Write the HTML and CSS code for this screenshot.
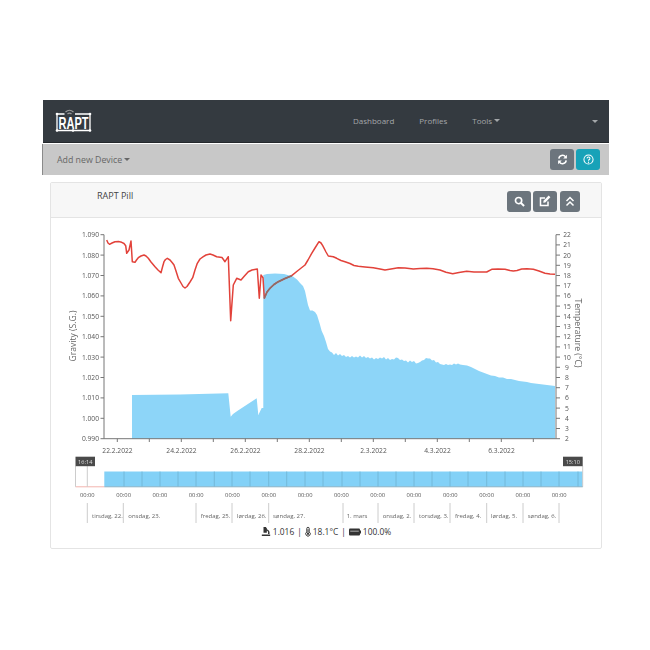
FILE: index.html
```html
<!DOCTYPE html>
<html lang="en">
<head>
    <meta charset="UTF-8">
    <meta name="viewport" content="width=device-width, initial-scale=1.0">
    <title>RAPT Pill</title>
    <link rel="stylesheet" href="styles.css">
</head>
<body>

    <div class="app">
        <nav class="navbar">
            <svg class="logo" width="37" height="24" viewBox="0 0 37 24">
                <path d="M9.5 5H2V21.5H35V5H20" fill="none" stroke="#fff" stroke-width="1.3"/>
                <path d="M10.5 3Q14.5 -0.5 18.5 3M12.5 5Q14.5 3 16.5 5" fill="none" stroke="#9a9a9a" stroke-width="1.2"/>
                <text class="logo-text" transform="translate(18.5 19.5) scale(0.69 1)">RAPT</text>
                <circle cx="2" cy="5" r="1.3" fill="#fff"/>
                <circle cx="2" cy="21.5" r="1.3" fill="#fff"/>
                <circle cx="35" cy="5" r="1.3" fill="#fff"/>
                <circle cx="35" cy="21.5" r="1.3" fill="#fff"/>
                <circle cx="18" cy="21.5" r="1.3" fill="#fff"/>
            </svg>
            <div class="nav-links">
                <a class="nav-link">Dashboard</a>
                <a class="nav-link">Profiles</a>
                <a class="nav-link">Tools<span class="caret"></span></a>
            </div>
            <span class="caret nav-end"></span>
        </nav>

        <div class="subbar">
            <a class="add-device">Add new Device<span class="caret"></span></a>
            <div class="btn-row">
                <button class="btn">
                    <svg width="11" height="11" viewBox="0 0 12 12"><path d="M2 5A4 4 0 0 1 9.3 3.2M10 7A4 4 0 0 1 2.7 8.8" fill="none" stroke="#fff" stroke-width="1.7"/><path d="M10.8 0.8V4.8H6.8ZM1.2 11.2V7.2H5.2Z" fill="#fff"/></svg>
                </button>
                <button class="btn btn-info">
                    <svg width="11" height="11" viewBox="0 0 12 12"><circle cx="6" cy="6" r="5" fill="none" stroke="#fff" stroke-width="1.1"/><path d="M4.4 4.8A1.6 1.6 0 1 1 6 6.5V7.4" fill="none" stroke="#fff" stroke-width="1.1"/><circle cx="6" cy="9" r="0.7" fill="#fff"/></svg>
                </button>
            </div>
        </div>

        <div class="card">
            <div class="card-header">
                <span class="card-title">RAPT Pill</span>
                <div class="btn-row card-btns">
                    <button class="btn btn-card">
                        <svg width="11" height="11" viewBox="0 0 12 12"><circle cx="5" cy="5" r="3.4" fill="none" stroke="#fff" stroke-width="1.8"/><path d="M7.5 7.5L11 11" stroke="#fff" stroke-width="2.2"/></svg>
                    </button>
                    <button class="btn btn-card">
                        <svg width="12" height="12" viewBox="0 0 12 12"><path d="M9 6.5V10.5H1.5V3H6" fill="none" stroke="#fff" stroke-width="1.5"/><path d="M4.5 5.7L9.7 0.6L11.4 2.3L6.3 7.5L4.3 7.8Z" fill="#fff"/></svg>
                    </button>
                    <button class="btn btn-card btn-narrow">
                        <svg width="10" height="11" viewBox="0 0 10 11"><path d="M1.5 5L5 1.5L8.5 5M1.5 9.5L5 6L8.5 9.5" fill="none" stroke="#fff" stroke-width="1.5"/></svg>
                    </button>
                </div>
            </div>

            <svg class="chart" width="552" height="307" viewBox="50 218 552 307">
                <!-- main plot, coordinates are page pixels -->
                <path class="area" d="M132 438.7V395L180 394.5L228.3 393.3L230.7 416.7L233 414L238 410.5L256.7 398.3L258.3 415L261.7 408L263.3 408V275L267 274L275 273.5L284 274L293 276.5L297 279.5L300 283L303 286L305 291L306.5 298L308 305L310 310.5L312.5 310.5L315 312L317 315L319.5 323L321.7 331L324 336L326 342L328 349L330 351.5L332 352.5L334 355L336 353L338 355.5L340 354L342 356L344 355L346 357L348 356L350 357.5L352 356L354 357.5L356 356.5L358 357.5L360 355.5L362 357.5L364 356L366 358L368 357L370 358.5L372 357.5L374 359.5L376 358L378 359L380 357.5L382 358.5L384 357L386 359.5L388 358L390 360L392 359L394 359.5L396 357.5L398 358L400 360L402 359.5L404 361L406 360.5L408 362.5L410 360.5L412 362L414 361L416 363.5L418 363L420 362L422 360.5L424 360L426 358L428 358.5L430 358.5L432 360.5L434 360L436 362.5L438 362L440 364L442 364.5L444 365L446 364L448 365L450 364.5L452 365L454 363.5L456 364.5L458 363.5L460 364.5L463 365L467 365.5L471 367L475 369L479 371L483 372.5L487 374L491 375.5L495 376L499 377.5L503 377.5L507 379L511 379L515 380L519 381L523 381.5L527 382L531 383L535 383.5L539 384L543 384.5L547 385L551 385.5L555 386V438.7Z"/>
                <polyline class="temp" points="106.7,240 108,243 109.5,244.3 112,243 115,241.7 118.5,241.6 121.7,242.3 124,243.5 125.7,245.7 126.7,253.3 129,250 131,241 132.3,261.7 135,262.3 136.5,260 138.3,257.7 141,256 144,255 146,256 148.3,258.3 151,262 155,266.7 158,270 161,272.7 162.5,267 164,261.7 165.5,259.5 167.3,258.3 170,260 172.5,263 174,265 176,271 178.3,278.3 181,283 183,286.5 185,288 187,286.5 190,282 192.7,277.7 195,270 197.3,263.3 200,259 203.3,256.7 206,255 210,254 213,255 216.7,256.7 222,257.5 225,261.7 228.3,256.7 230.7,320.7 233.3,285 236.7,278.3 241,280 244,276.5 248.3,271.7 252,270 257.3,269 259.3,298.3 261,275 263,277.7 264.3,298.3 267,292 270,288.3 274,284.5 278.3,281.7 285,278.5 291.7,275.7 298,270.5 305,265 308,260 311.7,253.3 315,248 319,241.7 321,243 322.7,245.7 326,252 328.3,256 333.3,256.7 336.7,258.3 341,260.5 345,261.7 350,263.5 354,265.5 358.3,266.3 365,267 373.3,267.7 380,269 385,270 391,269 398.3,267.7 405,268 413.3,269 420,268.5 426.7,268.3 433,268.7 440,270 446,272.3 452.7,273.7 459,272.5 466.7,271.3 474,272 482,272 486.7,272 491.7,269.3 498,269 505,269.3 510,270.5 513.3,271 517,270.5 521.7,269 527,268.8 533.3,269.3 539,271 545,273.3 550,274 555,274.3"/>
                <polyline class="temp-over" points="264.3,298.3 267,292 270,288.3 274,284.5 278.3,281.7 285,278.5 291.7,275.7"/>

                <path class="axis" d="M104 234.7V438.7H556V234.7"/>
                <path class="axis" d="M100.5 234.7H104M100.5 255.1H104M100.5 275.5H104M100.5 295.9H104M100.5 316.3H104M100.5 336.7H104M100.5 357.1H104M100.5 377.5H104M100.5 397.9H104M100.5 418.3H104M100.5 438.7H104"/>
                <path class="axis" d="M556 234.7H560M556 244.9H560M556 255.1H560M556 265.3H560M556 275.5H560M556 285.7H560M556 295.9H560M556 306.1H560M556 316.3H560M556 326.5H560M556 336.7H560M556 346.9H560M556 357.1H560M556 367.3H560M556 377.5H560M556 387.7H560M556 397.9H560M556 408.1H560M556 418.3H560M556 428.5H560M556 438.7H560"/>
                <path class="axis" d="M117.3 438.7V442M149.3 438.7V442M181.3 438.7V442M213.3 438.7V442M245.3 438.7V442M277.3 438.7V442M309.3 438.7V442M341.3 438.7V442M373.3 438.7V442M405.3 438.7V442M437.3 438.7V442M469.3 438.7V442M501.3 438.7V442M533.3 438.7V442"/>

                <g class="tick-left">
                    <text x="99" y="237.2">1.090</text>
                    <text x="99" y="257.6">1.080</text>
                    <text x="99" y="278">1.070</text>
                    <text x="99" y="298.4">1.060</text>
                    <text x="99" y="318.8">1.050</text>
                    <text x="99" y="339.2">1.040</text>
                    <text x="99" y="359.6">1.030</text>
                    <text x="99" y="380">1.020</text>
                    <text x="99" y="400.4">1.010</text>
                    <text x="99" y="420.8">1.000</text>
                    <text x="99" y="441.2">0.990</text>
                </g>
                <g class="tick-right">
                    <text x="567" y="237.2">22</text>
                    <text x="567" y="247.4">21</text>
                    <text x="567" y="257.6">20</text>
                    <text x="567" y="267.8">19</text>
                    <text x="567" y="278">18</text>
                    <text x="567" y="288.2">17</text>
                    <text x="567" y="298.4">16</text>
                    <text x="567" y="308.6">15</text>
                    <text x="567" y="318.8">14</text>
                    <text x="567" y="329">13</text>
                    <text x="567" y="339.2">12</text>
                    <text x="567" y="349.4">11</text>
                    <text x="567" y="359.6">10</text>
                    <text x="567" y="369.8">9</text>
                    <text x="567" y="380">8</text>
                    <text x="567" y="390.2">7</text>
                    <text x="567" y="400.4">6</text>
                    <text x="567" y="410.6">5</text>
                    <text x="567" y="420.8">4</text>
                    <text x="567" y="431">3</text>
                    <text x="567" y="441.2">2</text>
                </g>
                <g class="tick-date">
                    <text x="117.5" y="452.5">22.2.2022</text>
                    <text x="181.5" y="452.5">24.2.2022</text>
                    <text x="245.5" y="452.5">26.2.2022</text>
                    <text x="309.5" y="452.5">28.2.2022</text>
                    <text x="373.5" y="452.5">2.3.2022</text>
                    <text x="437.5" y="452.5">4.3.2022</text>
                    <text x="501.5" y="452.5">6.3.2022</text>
                </g>
                <text class="axis-title" transform="translate(76 336) rotate(-90)">Gravity (S.G.)</text>
                <text class="axis-title" transform="translate(575 333) rotate(90)">Temperature (°C)</text>

                <!-- navigator -->
                <rect class="nav-area" x="104.3" y="471.5" width="478.4" height="15.3"/>
                <path class="nav-low" d="M75.5 486.8H104.3"/>
                <path class="nav-frame" d="M75.5 466V486.8M582.7 466V486.8"/>
                <path class="nav-grid-light" d="M87.3 466V486.8"/>
                <path class="nav-grid" d="M124 471.5V486.8M142 471.5V486.8M160 471.5V486.8M178 471.5V486.8M196 471.5V486.8M214.3 471.5V486.8M232 471.5V486.8M250 471.5V486.8M268.7 471.5V486.8M286.7 471.5V486.8M305 471.5V486.8M323 471.5V486.8M342 471.5V486.8M360 471.5V486.8M378 471.5V486.8M396 471.5V486.8M414 471.5V486.8M432 471.5V486.8M450 471.5V486.8M468 471.5V486.8M486.7 471.5V486.8M505 471.5V486.8M523 471.5V486.8M541 471.5V486.8M559 471.5V486.8M578 471.5V486.8"/>
                <path class="nav-base" d="M104.3 486.8H582.7"/>
                <rect class="handle" x="75.5" y="456.7" width="19.5" height="9.5"/>
                <text class="handle-text" x="85.2" y="463.5">16:14</text>
                <rect class="handle" x="563" y="456.7" width="19.7" height="9.5"/>
                <text class="handle-text" x="572.8" y="463.5">15:10</text>

                <g class="tick-time">
                    <text x="87.3" y="497.3">00:00</text>
                    <text x="123.6" y="497.3">00:00</text>
                    <text x="159.9" y="497.3">00:00</text>
                    <text x="196.2" y="497.3">00:00</text>
                    <text x="232.5" y="497.3">00:00</text>
                    <text x="268.8" y="497.3">00:00</text>
                    <text x="305.1" y="497.3">00:00</text>
                    <text x="341.4" y="497.3">00:00</text>
                    <text x="377.7" y="497.3">00:00</text>
                    <text x="414" y="497.3">00:00</text>
                    <text x="450.3" y="497.3">00:00</text>
                    <text x="486.6" y="497.3">00:00</text>
                    <text x="522.9" y="497.3">00:00</text>
                    <text x="559.2" y="497.3">00:00</text>
                </g>
                <path class="day-line" d="M87.3 503V523M123.3 503V523M196 503V523M232 503V523M268.7 503V523M343 503V523M378 503V523M414 503V523M450 503V523M486.7 503V523M523 503V523M559 503V523"/>
                <g class="tick-day">
                    <text x="92" y="518">tirsdag, 22.</text>
                    <text x="128.3" y="518">onsdag, 23.</text>
                    <text x="200.7" y="518">fredag, 25.</text>
                    <text x="237" y="518">lørdag, 26.</text>
                    <text x="273" y="518">søndag, 27.</text>
                    <text x="346.7" y="518">1. mars</text>
                    <text x="382.7" y="518">onsdag, 2.</text>
                    <text x="419" y="518">torsdag, 3.</text>
                    <text x="455" y="518">fredag, 4.</text>
                    <text x="491" y="518">lørdag, 5.</text>
                    <text x="527.7" y="518">søndag, 6.</text>
                </g>
            </svg>

            <div class="status">
                <svg width="10" height="11" viewBox="0 0 12 12"><path d="M3 0.5H6V1.5H7V3.2C9.6 4 10.7 6 10.2 9H8.4C8.9 6.8 8.3 5.4 7 4.8V7.5H3V1.5ZM1 9.5H11V11.5H1Z" fill="#333"/></svg>
                <span>1.016</span>
                <span class="sep">|</span>
                <svg width="6" height="11" viewBox="0 0 8 12"><path d="M2.4 6.6V2A1.6 1.6 0 0 1 5.6 2V6.6A3 3 0 1 1 2.4 6.6Z" fill="none" stroke="#333" stroke-width="1.3"/><circle cx="4" cy="9" r="1.5" fill="#333"/><path d="M4 3V8" stroke="#333" stroke-width="1.2"/></svg>
                <span>18.1°C</span>
                <span class="sep">|</span>
                <svg width="12" height="8" viewBox="0 0 12 8"><rect x="0" y="0.5" width="11" height="7" rx="1" fill="#333"/><rect x="11" y="2.5" width="1" height="3" fill="#333"/><rect x="1.2" y="2.6" width="8.6" height="1.2" fill="#999"/></svg>
                <span>100.0%</span>
            </div>
        </div>
    </div>

</body>
</html>
```

FILE: styles.css
```css
body {
    margin: 0;
    padding: 100px 41px 0 43px;
    background-color: #fff;
    font-family: "Open Sans", "Liberation Sans", sans-serif;
    color: #444;
}
.app {
    width: 566px;
}
.navbar {
    display: flex;
    align-items: center;
    height: 43px;
    padding: 0 12px;
    box-sizing: border-box;
    background-color: #343a40;
    border-bottom: 1px solid #24282c;
}
.logo {
    display: block;
}
.logo-text {
    font-family: "Liberation Sans", sans-serif;
    font-size: 16px;
    font-weight: bold;
    fill: #fff;
    text-anchor: middle;
}
.nav-links {
    display: flex;
    gap: 25px;
    margin-left: 261px;
    margin-top: -1px;
}
.nav-link {
    font-size: 8px;
    color: #a4a7aa;
}
.caret {
    display: inline-block;
    margin-left: 2px;
    vertical-align: 2px;
    border-top: 3px solid currentColor;
    border-left: 3px solid transparent;
    border-right: 3px solid transparent;
}
.nav-end {
    margin-left: auto;
    margin-right: -1px;
    color: #a4a7aa;
}
.subbar {
    display: flex;
    align-items: center;
    justify-content: space-between;
    height: 31px;
    margin-top: 1px;
    padding: 0 9px 0 14px;
    background-color: #c8c8c8;
    box-shadow: -1px 0 0 #8a8a8a;
}
.add-device {
    font-size: 8.8px;
    color: #666;
}
.btn-row {
    display: flex;
    gap: 2px;
}
.btn {
    display: flex;
    align-items: center;
    justify-content: center;
    width: 24px;
    height: 21px;
    padding: 0;
    border: none;
    border-radius: 3px;
    background-color: #6c757d;
}
.btn-info {
    background-color: #17a2b8;
}
.card {
    height: 367px;
    margin: 7px 7px 0;
    box-sizing: border-box;
    border: 1px solid #e4e4e4;
    border-radius: 2px;
}
.card-header {
    display: flex;
    align-items: center;
    justify-content: space-between;
    height: 34px;
    padding: 0 21px 0 46px;
    background-color: #f7f7f7;
    border-bottom: 1px solid #e4e4e4;
}
.card-title {
    margin-top: -9px;
    font-size: 9px;
    color: #444;
}
.card-btns {
    margin-top: 2px;
}
.btn-narrow {
    width: 20px;
    margin-left: 1px;
}
.chart {
    display: block;
    margin-left: -1px;
    will-change: transform;
}
.chart text {
    font-family: "Open Sans", "Liberation Sans", sans-serif;
}
.area {
    fill: #8dd5f8;
}
.temp {
    fill: none;
    stroke: #e2423a;
    stroke-width: 1.5;
    stroke-linejoin: round;
}
.temp-over {
    fill: none;
    stroke: #8c6e6a;
    stroke-width: 1.5;
    stroke-linejoin: round;
}
.axis {
    fill: none;
    stroke: #777;
    stroke-width: 1;
}
.tick-left text,
.tick-right text,
.tick-date text {
    font-size: 6.7px;
    fill: #555;
}
.tick-left text {
    text-anchor: end;
}
.tick-right text,
.tick-date text {
    text-anchor: middle;
}
.axis-title {
    font-size: 8.6px;
    fill: #666;
    text-anchor: middle;
}
.nav-area {
    fill: #83d1f7;
}
.nav-low {
    stroke: #f3b4ae;
    stroke-width: 1;
}
.nav-frame,
.nav-grid-light {
    stroke: #ccc;
    stroke-width: 1;
}
.nav-grid {
    stroke: #6fb2d2;
    stroke-width: 0.8;
}
.nav-base {
    stroke: #8fb4c6;
    stroke-width: 1;
}
.handle {
    fill: #4a4a4a;
}
.handle-text {
    font-size: 5.6px;
    fill: #ddd;
    text-anchor: middle;
}
.tick-time text {
    font-size: 5.8px;
    fill: #555;
    text-anchor: middle;
}
.tick-day text {
    font-size: 6px;
    fill: #666;
}
.day-line {
    stroke: #ccc;
    stroke-width: 1;
}
.status {
    display: flex;
    align-items: center;
    justify-content: center;
    gap: 2px;
    height: 13px;
    font-size: 8.4px;
    color: #333;
}
.sep {
    margin: 0 1px;
}
```
